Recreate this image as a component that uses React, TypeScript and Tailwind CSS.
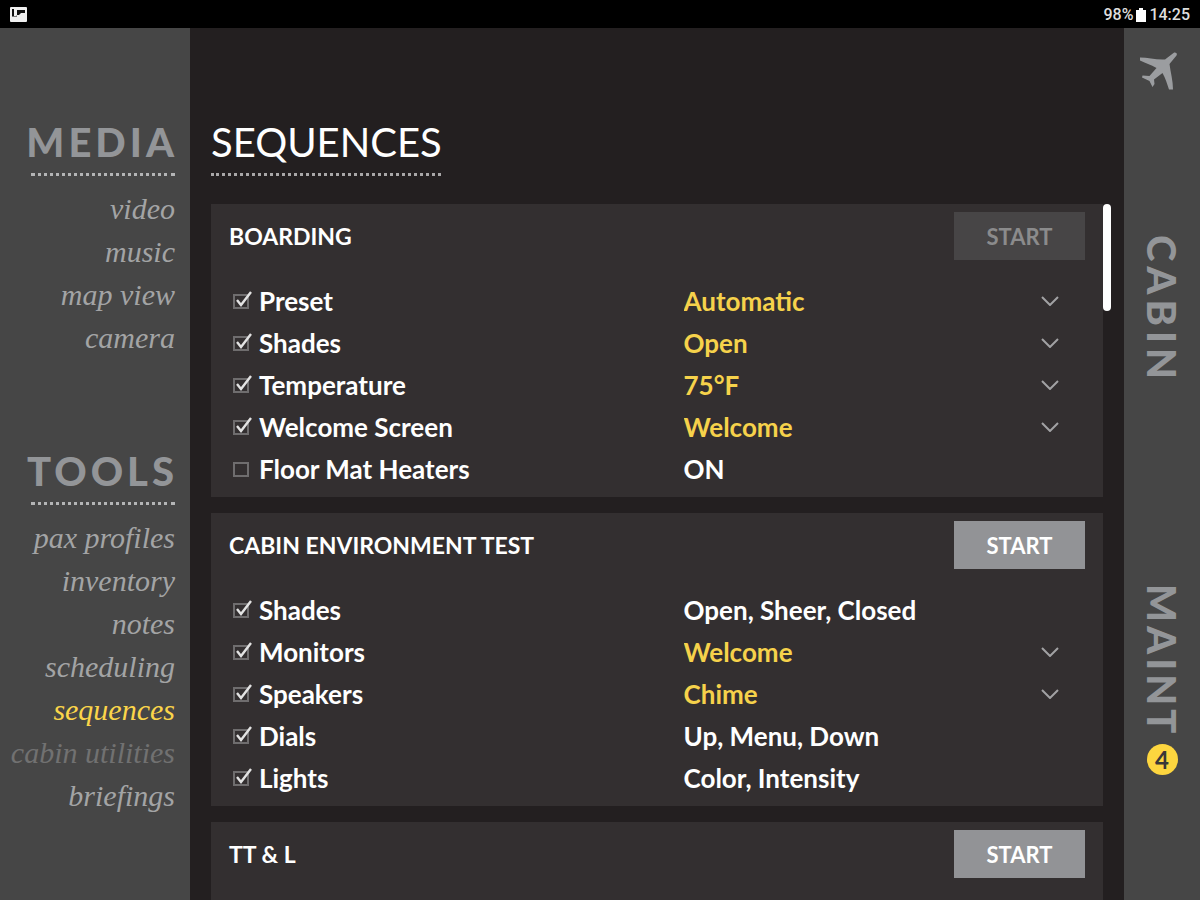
import { useId } from "react";

type Row = {
  label: string;
  value: string;
  checked: boolean;
  options?: string[];
};

type Sequence = {
  title: string;
  disabled?: boolean;
  rows: Row[];
};

const MEDIA_LINKS = ["video", "music", "map view", "camera"];

const TOOL_LINKS = [
  "pax profiles",
  "inventory",
  "notes",
  "scheduling",
  "sequences",
  "cabin utilities",
  "briefings",
];

const SEQUENCES: Sequence[] = [
  {
    title: "BOARDING",
    disabled: true,
    rows: [
      { label: "Preset", value: "Automatic", checked: true, options: ["Automatic", "Manual"] },
      { label: "Shades", value: "Open", checked: true, options: ["Open", "Sheer", "Closed"] },
      { label: "Temperature", value: "75°F", checked: true, options: ["70°F", "75°F", "80°F"] },
      { label: "Welcome Screen", value: "Welcome", checked: true, options: ["Welcome", "Off"] },
      { label: "Floor Mat Heaters", value: "ON", checked: false },
    ],
  },
  {
    title: "CABIN ENVIRONMENT TEST",
    rows: [
      { label: "Shades", value: "Open, Sheer, Closed", checked: true },
      { label: "Monitors", value: "Welcome", checked: true, options: ["Welcome", "Off"] },
      { label: "Speakers", value: "Chime", checked: true, options: ["Chime", "Off"] },
      { label: "Dials", value: "Up, Menu, Down", checked: true },
      { label: "Lights", value: "Color, Intensity", checked: true },
    ],
  },
  { title: "TT & L", rows: [] },
];

function StatusBar() {
  return (
    <header className="flex h-7 shrink-0 items-center justify-between bg-black px-[10px] pt-px font-[Roboto,sans-serif] text-base font-medium text-[#dedede]">
      <svg viewBox="0 0 17 15" className="h-[15px] w-[17px]" aria-hidden="true">
        <rect width="17" height="15" rx="1" fill="#f0f0f0" />
        <path d="M2 2h2v7H2zM7 3h8v3h-4L9 8H7z" fill="#111" />
        <path d="M2 9h4l1-1v2H2z" fill="#777" />
      </svg>
      <div className="flex items-center gap-[3px]">
        <span>98%</span>
        <svg viewBox="0 0 10 14" className="h-[14px] w-[10px]" aria-hidden="true">
          <path d="M3 0h4v2h3v12H0V2h3z" fill="#fff" />
        </svg>
        <span>14:25</span>
      </div>
    </header>
  );
}

function linkColor(name: string) {
  if (name === "sequences") return "text-[#fbd54a]";
  if (name === "cabin utilities") return "text-[#717171]";
  return "text-[#a3a4a5]";
}

function NavGroup({ title, links }: { title: string; links: string[] }) {
  return (
    <section className="flex flex-col items-end">
      <h2 className="-mr-[3px] text-[40px] leading-[48px] font-black tracking-[4px] text-[#939598]">
        {title}
      </h2>
      <div className="mt-[7px] w-36 border-t-[3px] border-dotted border-[#b4b5b6]" />
      <ul className="mt-[11px] text-right font-['Liberation_Serif',serif] text-[30px] leading-[43px] italic">
        {links.map((name) => (
          <li key={name}>
            <a href="#" className={`whitespace-nowrap ${linkColor(name)}`}>
              {name}
            </a>
          </li>
        ))}
      </ul>
    </section>
  );
}

function Chevron() {
  return (
    <svg
      viewBox="0 0 18 10"
      className="pointer-events-none -ml-[18px] h-[10px] w-[18px] shrink-0"
      aria-hidden="true"
    >
      <path d="M1 1l8 8 8-8" fill="none" stroke="#a2a2a4" strokeWidth="2" />
    </svg>
  );
}

function SequenceRow({ row }: { row: Row }) {
  const id = useId();
  return (
    <li className="grid h-[42px] grid-cols-[6fr_5fr] items-center">
      <div className="flex items-center">
        <span className="relative mr-[10px] h-[15px] w-4">
          <input
            id={id}
            type="checkbox"
            defaultChecked={row.checked}
            className="peer block h-[15px] w-4 appearance-none border-2 border-[#6f6d6e]"
          />
          <svg
            viewBox="0 0 19 18"
            className="pointer-events-none absolute bottom-0 left-0 hidden h-[18px] w-[19px] peer-checked:block"
            aria-hidden="true"
          >
            <path d="M4 9l4 5 10-13" fill="none" stroke="#e3e3e3" strokeWidth="2.4" />
          </svg>
        </span>
        <label htmlFor={id}>{row.label}</label>
      </div>
      {row.options ? (
        <div className="flex items-center">
          <select
            aria-label={row.label}
            defaultValue={row.value}
            className="w-full appearance-none bg-transparent text-[#f6d24b]"
          >
            {row.options.map((option) => (
              <option key={option}>{option}</option>
            ))}
          </select>
          <Chevron />
        </div>
      ) : (
        <span>{row.value}</span>
      )}
    </li>
  );
}

function SequenceCard({ sequence }: { sequence: Sequence }) {
  return (
    <section className="min-h-[120px] shrink-0 bg-[#332f30] pt-2 pb-[7px] font-bold text-white">
      <div className="flex items-center justify-between px-[18px] text-[23px]">
        <h2>{sequence.title}</h2>
        <button
          type="button"
          disabled={sequence.disabled}
          className="h-12 w-[131px] bg-[#929396] text-[22px] text-white disabled:bg-[#474546] disabled:text-[#8b8b8c]"
        >
          START
        </button>
      </div>
      <ul className="mt-5 pr-11 pl-[22px] text-[26px] leading-8">
        {sequence.rows.map((row) => (
          <SequenceRow key={row.label} row={row} />
        ))}
      </ul>
    </section>
  );
}

function PlaneIcon() {
  return (
    <svg viewBox="0 0 38 38" className="h-[38px] w-[38px]" aria-hidden="true">
      <path
        d="M0 5.5C8 5.5 16 8 25 7.500L33.500 1C35.500-.2 37.800 1.500 36.500 3.500L29.500 12C30.500 20 33 29 33 37.500L29 37.500C27 32 25.500 26 22.500 21L14 27.500L14.500 32L12.500 35L9.500 29L2 25.500L2.500 23.500L9.500 24L16.500 16C11 12.500 5 11 0 8.500Z"
        fill="#9b9da0"
      />
    </svg>
  );
}

function SideTabs() {
  return (
    <aside className="flex w-[76px] shrink-0 flex-col items-center bg-[#464646] pt-6">
      <a href="#" aria-label="Flight" className="mr-[6px]">
        <PlaneIcon />
      </a>
      <nav className="flex flex-col items-center text-[40px] leading-[42px] font-black text-[#939598]">
        <a href="#" className="mt-[145px] tracking-[5px] [writing-mode:vertical-rl]">
          CABIN
        </a>
        <a href="#" className="mt-[200px] tracking-[4px] [writing-mode:vertical-rl]">
          MAINT
        </a>
      </nav>
      <span className="mt-[7px] flex size-[31px] items-center justify-center rounded-full bg-[#fdd63f] text-2xl font-bold text-[#3a3838]">
        4
      </span>
    </aside>
  );
}

export default function App() {
  return (
    <div className="flex h-screen flex-col overflow-hidden bg-[#231f20] font-[Lato,sans-serif]">
      <StatusBar />
      <div className="flex min-h-0 flex-1">
        <nav className="flex w-[190px] shrink-0 flex-col gap-[88px] bg-[#464646] pt-[90px] pr-[15px]">
          <NavGroup title="MEDIA" links={MEDIA_LINKS} />
          <NavGroup title="TOOLS" links={TOOL_LINKS} />
        </nav>
        <main className="flex min-w-0 flex-1 flex-col pt-[90px] pr-[13px] pl-[21px]">
          <h1 className="w-[230px] border-b-[3px] border-dotted border-[#a9a7a8] pb-[7px] text-[40px] leading-[48px] font-normal text-white">
            SEQUENCES
          </h1>
          <div className="mt-7 flex min-h-0 flex-1">
            <div className="flex min-w-0 flex-1 flex-col gap-4 overflow-hidden">
              {SEQUENCES.map((sequence) => (
                <SequenceCard key={sequence.title} sequence={sequence} />
              ))}
            </div>
            <div className="h-[107px] w-2 shrink-0 rounded-full bg-white" />
          </div>
        </main>
        <SideTabs />
      </div>
    </div>
  );
}
